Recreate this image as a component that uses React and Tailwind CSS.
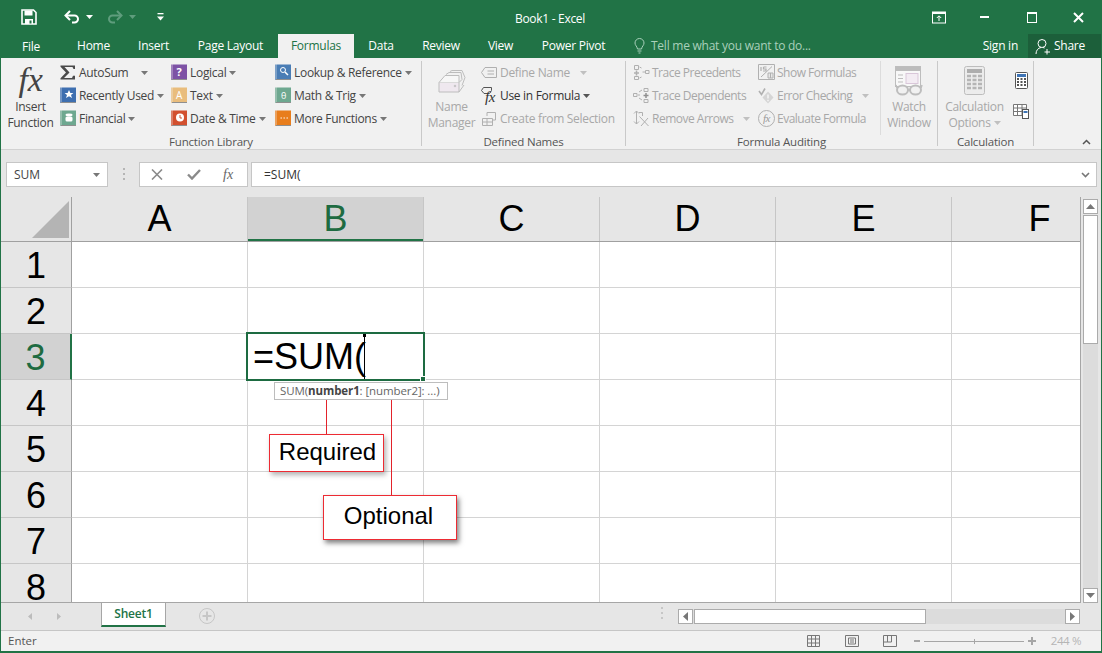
const ui = { fontFamily: "'Open Sans', 'Noto Sans', sans-serif" };

function Caret({ className = "" }) {
  return (
    <svg width="7" height="4" viewBox="0 0 7 4" className={`shrink-0 ${className}`}>
      <path d="M0 0h7L3.5 4z" fill="currentColor" />
    </svg>
  );
}

// the little coloured "book" icons of the function library
function Book({ color, children }) {
  return (
    <svg width="16" height="17" viewBox="0 0 16 17" className="shrink-0">
      <rect x="0" y="0.5" width="2" height="15.5" fill={color} opacity="0.7" />
      <rect x="2" y="0.5" width="14" height="14.5" fill={color} />
      <rect x="1" y="15" width="15" height="1" fill="#8f8f8f" />
      {children}
    </svg>
  );
}

function Sigma() {
  return (
    <svg width="16" height="15" viewBox="0 0 16 15" className="shrink-0">
      <path d="M0.5 0.5h14.5v3.5h-1.5l-1-2H4.5l5 5.5-5.5 5.5h8l1-2.2H15v3.7H0.5v-1.3L6 7.5 0.5 1.8z" fill="#4a4a4a" />
    </svg>
  );
}

function FnCommand({ icon, label, caret, caretGap = "ml-[3px]" }) {
  return (
    <div className="flex h-[23px] items-center whitespace-nowrap">
      <div className="flex w-[19px] shrink-0">{icon}</div>
      <span className="text-[#444]">{label}</span>
      {caret && <Caret className={`${caretGap} text-[#777]`} />}
    </div>
  );
}

function Disabled({ icon, label, caret, caretGap = "ml-[3px]", enabled }) {
  return (
    <div className="flex h-[23px] items-center whitespace-nowrap">
      <div className="flex w-[19px] shrink-0">{icon}</div>
      <span className={enabled ? "text-[#333]" : "text-[#a8a8a8]"}>{label}</span>
      {caret && <Caret className={`${caretGap} ${enabled ? "text-[#555]" : "text-[#c0c0c0]"}`} />}
    </div>
  );
}

function Glyph({ children }) {
  return (
    <svg width="17" height="17" viewBox="0 0 17 17" fill="none" stroke="#b0b0b0" className="shrink-0">
      {children}
    </svg>
  );
}

function Group({ label, width, children }) {
  return (
    <div className={`flex h-[85px] shrink-0 flex-col border-r border-[#c9c9c9] ${width}`}>
      <div className="flex h-[74px] shrink-0">{children}</div>
      <div className="text-center text-[11.5px] leading-[14px] tracking-[-0.2px] text-[#555]">{label}</div>
    </div>
  );
}

const tabs = [
  { name: "Home", w: "w-[61px]" },
  { name: "Insert", w: "w-[59px]" },
  { name: "Page Layout", w: "w-[95px]" },
];
const tabs2 = [
  { name: "Data", w: "w-[54px]" },
  { name: "Review", w: "w-[66px]" },
  { name: "View", w: "w-[53px]" },
  { name: "Power Pivot", w: "w-[93px]" },
];

function TitleBar() {
  return (
    <div className="relative flex h-[34px] items-center bg-[#217346] text-white">
      <svg width="16" height="16" viewBox="0 0 16 16" className="ml-[20px]">
        <path d="M1 1h11.5L15 3.5V15H1z" fill="none" stroke="#fff" strokeWidth="1.6" />
        <rect x="3.5" y="1.5" width="8" height="5" fill="#fff" />
        <rect x="4" y="10" width="8" height="5" fill="#fff" />
        <rect x="8.5" y="11.5" width="2" height="3" fill="#217346" />
      </svg>
      <svg width="16" height="14" viewBox="0 0 16 14" fill="none" className="ml-[27px]">
        <path d="M2 5.5h8.5a3.5 3.5 0 0 1 0 7H8" stroke="#fff" strokeWidth="2" />
        <path d="M6 1L1.5 5.5 6 10" stroke="#fff" strokeWidth="2" />
      </svg>
      <Caret className="ml-[6px] text-white" />
      <svg width="16" height="14" viewBox="0 0 16 14" fill="none" className="ml-[14px]">
        <path d="M14 5.5H5.5a3.5 3.5 0 0 0 0 7H8" stroke="#5f9d7d" strokeWidth="2" />
        <path d="M10 1l4.5 4.5L10 10" stroke="#5f9d7d" strokeWidth="2" />
      </svg>
      <Caret className="ml-[6px] text-[#5f9d7d]" />
      <svg width="7" height="8" viewBox="0 0 7 8" className="ml-[21px]">
        <rect x="0.5" y="0" width="6" height="1.3" fill="#fff" />
        <path d="M0 3.5h7L3.5 7.5z" fill="#fff" />
      </svg>
      <div className="absolute left-[514px] top-[9px] text-[12px] leading-[20px] tracking-[-0.3px]">Book1 - Excel</div>
      <div className="ml-auto flex items-center">
        <svg width="14" height="13" viewBox="0 0 14 13" fill="none" className="mr-[34px]">
          <rect x="0.5" y="1" width="13" height="11" stroke="#fff" />
          <rect x="0.5" y="1" width="13" height="2" fill="#fff" />
          <path d="M7 10V5M4.8 7L7 4.8 9.2 7" stroke="#fff" />
        </svg>
        <div className="mr-[38px] h-[2px] w-[9px] bg-white" />
        <div className="mr-[36px] h-[11px] w-[10px] border border-t-2 border-white" />
        <svg width="11" height="11" viewBox="0 0 11 11" className="mr-[17px]">
          <path d="M1 1l9 9M10 1l-9 9" stroke="#fff" strokeWidth="2" />
        </svg>
      </div>
    </div>
  );
}

function TabBar() {
  return (
    <div className="flex h-[24px] items-stretch bg-[#217346] text-[12px] tracking-[-0.25px] text-white">
      <div className="flex w-[62px] items-center justify-center pr-[2px] pt-px">File</div>
      {tabs.map((t) => (
        <div key={t.name} className={`flex items-center justify-center ${t.w}`}>{t.name}</div>
      ))}
      <div className="flex w-[76px] items-center justify-center bg-[#f1f1f1] text-[#217346]">Formulas</div>
      {tabs2.map((t) => (
        <div key={t.name} className={`flex items-center justify-center ${t.w}`}>{t.name}</div>
      ))}
      <svg width="11" height="16" viewBox="0 0 11 16" fill="none" className="ml-[14px] mt-[4px]">
        <path d="M3.5 11C3 8 1 7.5 1 5a4.5 4.5 0 0 1 9 0c0 2.500-2 3-2.500 6zM3.500 13h4M4.500 15h2" stroke="#a9d0bb" />
      </svg>
      <div className="ml-[6px] flex items-center text-[#a9d0bb]">Tell me what you want to do...</div>
      <div className="ml-auto flex items-center">Sign in</div>
      <div className="ml-[10px] flex w-[73px] items-center bg-[#1c5f3a] pl-[7px]">
        <svg width="16" height="17" viewBox="0 0 16 17" fill="none">
          <circle cx="7" cy="5.500" r="4" stroke="#fff" />
          <path d="M1 16c0-3.500 2-6 5-6.500M8 9.500l1.500.5M12 11v5.500M9.500 14H15" stroke="#fff" />
        </svg>
        <span className="ml-[3px]">Share</span>
      </div>
    </div>
  );
}

function Ribbon() {
  return (
    <div className="flex h-[92px] border-b border-[#d2d2d2] bg-[#f1f1f1] pt-[3px] text-[12px] leading-[16px] tracking-[-0.3px]" style={ui}>
      <Group label="Function Library" width="w-[421px]">
        <div className="flex w-[59px] shrink-0 flex-col items-center">
          <div className="h-[38px] pt-[2px] font-['Liberation_Serif',serif] text-[34px] italic leading-[34px] text-[#444]">fx</div>
          <div className="text-center text-[#444]">Insert<br />Function</div>
        </div>
        <div className="w-[111px] shrink-0">
          <FnCommand icon={<Sigma />} label="AutoSum" caret caretGap="ml-[13px]" />
          <FnCommand icon={<Book color="#3e6fb0"><path d="M9 3l1.400 3h3l-2.400 2 1 3-3-1.800L6 11l1-3-2.400-2h3z" fill="#fff" /></Book>} label="Recently Used" caret />
          <FnCommand icon={<Book color="#6ea890"><ellipse cx="9" cy="5" rx="3.500" ry="1.400" fill="#fff" /><rect x="5.500" y="6.500" width="7" height="5" rx="1.500" fill="#fff" /></Book>} label="Financial" caret />
        </div>
        <div className="w-[104px] shrink-0">
          <FnCommand icon={<Book color="#7d52a5"><text x="5.500" y="12" fontSize="11" fontWeight="700" fill="#fff">?</text></Book>} label="Logical" caret />
          <FnCommand icon={<Book color="#e9bd7d"><text x="5" y="12" fontSize="10" fill="#fff">A</text></Book>} label="Text" caret />
          <FnCommand icon={<Book color="#d2502f"><circle cx="9" cy="7.500" r="4" fill="#fff" /><path d="M9 5v3h2" stroke="#d2502f" fill="none" /></Book>} label="Date & Time" caret />
        </div>
        <div className="shrink-0">
          <FnCommand icon={<Book color="#4a7db5"><circle cx="8" cy="6" r="2.500" fill="none" stroke="#fff" /><path d="M10 8l3 3" stroke="#fff" strokeWidth="1.500" /></Book>} label="Lookup & Reference" caret />
          <FnCommand icon={<Book color="#6ea890"><text x="6" y="11.500" fontSize="9" fill="#fff">θ</text></Book>} label="Math & Trig" caret />
          <FnCommand icon={<Book color="#e87d1c"><path d="M5.500 8h1.400M8.500 8h1.400M11.500 8h1.400" stroke="#fff" /></Book>} label="More Functions" caret />
        </div>
      </Group>

      <Group label="Defined Names" width="w-[204px]">
        <div className="flex w-[59px] shrink-0 flex-col items-center text-[#a8a8a8]">
          <div className="h-[38px] pt-[9px]">
            <svg width="28" height="23" viewBox="0 0 28 23" fill="none" stroke="#bdbdbd">
              <path d="M1 12.500h20v9.500H1z" fill="#efe8ef" />
              <path d="M1 12.500L7 5.500h14l0 7" fill="#f7f7f7" />
              <path d="M8 4.500L11 2.500h12l1 7-3 3M12 1.500L14 .5h10l3 7-3 8" />
              <path d="M21 22l5-7" />
              <circle cx="17" cy="16" r="0.800" />
            </svg>
          </div>
          <div className="text-center">Name<br />Manager</div>
        </div>
        <div>
          <Disabled icon={<Glyph><path d="M4 3.500h11.500v10H4L.5 8.500z" /><path d="M6.500 7h6.500M6.500 10h6.500" /></Glyph>} label="Define Name" caret caretGap="ml-[10px]" />
          <Disabled
            enabled
            icon={
              <div className="relative h-[18px] w-[17px]">
                <svg width="11" height="8" viewBox="0 0 11 8" fill="none" className="absolute left-0 top-0">
                  <path d="M2.500.5h8v3l-2 3H3L.5 3.500z" stroke="#555" />
                </svg>
                <span className="absolute left-[4px] top-[2px] font-['Liberation_Serif',serif] text-[15px] italic leading-[16px] text-[#333]">fx</span>
              </div>
            }
            label="Use in Formula"
            caret
          />
          <Disabled icon={<Glyph><path d="M1.500 8.500h10v7h-10zM1.500 12h10M6 8.500v7" /><path d="M6 6V2.500h8.500V10H12" /></Glyph>} label="Create from Selection" />
        </div>
      </Group>

      <Group label="Formula Auditing" width="w-[312px]">
        <div className="w-[132px] shrink-0 pl-[7px] tracking-[-0.5px]">
          <Disabled icon={<Glyph><path d="M1.500 1.500h4v4h-4zM1.500 12.500h4v3h-4zM12.500 6.500h3.500v3h-3.500zM6.500 3l2 1M6.500 14l2-1M9.500 8H12" /><path d="M3.500 6.500v5M1 9h5" strokeWidth="1.500" /></Glyph>} label="Trace Precedents" />
          <Disabled icon={<Glyph><path d="M.5 6.500h3.500v3H.5zM11 1.500h4v3h-4zM11 12.500h4v3h-4zM5 8h2M6 5l3-2M6 11l3 2" /><path d="M13 6v5M10.500 8.500h5" stroke="#909090" strokeWidth="1.500" /></Glyph>} label="Trace Dependents" />
          <Disabled icon={<Glyph><path d="M3.500 1v13M1 3.500L3.500 1 6 3.500M1 11.500L3.500 14 6 11.500M6 2.500h3.500V6M6.500 6.500L15.500 16M15 8l-7 8" /></Glyph>} label="Remove Arrows" caret caretGap="ml-[10px]" />
        </div>
        <div className="w-[123px] shrink-0 border-r border-[#dcdcdc] tracking-[-0.5px]">
          <Disabled icon={<Glyph><path d="M.5.500h16v15H.5zM3 13L14 2.500" /><path d="M3 3v4M5.500 3h3M5.500 3v2h2.500v2h-3" strokeWidth="1.200" /><path d="M10 9h5v5h-5zM12.500 9v5" fill="#e7e7e7" /></Glyph>} label="Show Formulas" />
          <Disabled icon={<Glyph><path d="M1 4l2.500 3.500L7 1.500" strokeWidth="1.600" /><path d="M10 4.500l5.500 6-5.500 6-5.500-6z" fill="#d5d5d5" stroke="none" /><path d="M10 7.500v4M10 12.800v1.400" stroke="#f7f7f7" strokeWidth="1.400" /></Glyph>} label="Error Checking" caret caretGap="ml-[10px]" />
          <Disabled
            icon={
              <div className="flex h-[17px] w-[17px] items-center justify-center rounded-full border border-[#b0b0b0] font-['Liberation_Serif',serif] text-[11px] italic leading-none text-[#999]">fx</div>
            }
            label="Evaluate Formula"
          />
        </div>
        <div className="flex flex-1 flex-col items-center text-[#a8a8a8]">
          <div className="h-[38px] pt-[5px]">
            <svg width="30" height="30" viewBox="0 0 30 30" fill="none" stroke="#bdbdbd">
              <rect x="1.500" y="0.500" width="25" height="20" fill="#f8f8f8" />
              <rect x="1.500" y="0.500" width="25" height="4" fill="#bcbcbc" />
              <rect x="12" y="7.500" width="12" height="10" fill="#f3ecf3" stroke="#d9c7d9" />
              <path d="M4 9h5M4 12.500h5M4 16h5" />
              <ellipse cx="8.500" cy="24" rx="5.500" ry="4.500" fill="#f1f1f1" strokeWidth="2" />
              <ellipse cx="21.500" cy="24" rx="5.500" ry="4.500" fill="#f1f1f1" strokeWidth="2" />
              <path d="M14 24h2M3 22l-1-3M27 22l1-3" strokeWidth="1.500" />
            </svg>
          </div>
          <div className="text-center">Watch<br />Window</div>
        </div>
      </Group>

      <Group label="Calculation" width="w-[96px]">
        <div className="flex w-[73px] shrink-0 flex-col items-center text-[#a8a8a8]">
          <div className="h-[38px] pt-[5px]">
            <svg width="21" height="29" viewBox="0 0 21 29" fill="none">
              <rect x="0.500" y="0.500" width="20" height="28" rx="2" fill="#ececec" stroke="#bdbdbd" />
              <rect x="3" y="3" width="15" height="4" fill="#aeaeae" />
              <path d="M3 10h15M3 14h15M3 18h15M3 22h15" stroke="#b5b5b5" strokeWidth="2.500" strokeDasharray="4 1.500" />
            </svg>
          </div>
          <div className="text-center">Calculation</div>
          <div className="flex items-center">Options<Caret className="ml-[3px] text-[#c0c0c0]" /></div>
        </div>
        <div className="flex flex-col items-center pl-[2px]">
          <svg width="13" height="17" viewBox="0 0 13 17" fill="none" className="mt-[11px]">
            <rect x="0.500" y="0.500" width="12" height="16" rx="1" fill="#fff" stroke="#555" />
            <rect x="2" y="2" width="9" height="3" fill="#3e74b5" />
            <path d="M2 7h9M2 10h9M2 13h9" stroke="#555" strokeWidth="2" strokeDasharray="2 1.500" />
          </svg>
          <svg width="16" height="15" viewBox="0 0 16 15" fill="none" className="mt-[15px]">
            <path d="M0.500 0.500h13v11h-13zM0.500 4h13M0.500 7.500h13M4.500 .5v11M9 .5v11" fill="#fff" stroke="#777" />
            <rect x="9.500" y="5.500" width="6" height="9" fill="#fff" stroke="#555" />
            <rect x="10.500" y="7" width="4" height="2" fill="#3e74b5" />
          </svg>
        </div>
      </Group>

      <div className="relative flex-1">
        <svg width="9" height="6" viewBox="0 0 9 6" fill="none" className="absolute left-[48px] top-[78px]">
          <path d="M1 5l3.500-3.500L8 5" stroke="#555" strokeWidth="1.500" />
        </svg>
      </div>
    </div>
  );
}

function FormulaBar() {
  return (
    <div className="flex h-[47px] items-start bg-[#e6e6e6] pl-[5px] pt-[12px] text-[12px]" style={ui}>
      <div className="flex h-[25px] w-[102px] items-center border border-[#c6c6c6] bg-white pl-[7px] pr-[7px] text-[#444]">
        SUM
        <Caret className="ml-auto text-[#777]" />
      </div>
      <div className="ml-[15px] flex w-[3px] flex-col gap-[3px] pt-[6px]">
        <div className="h-[2px] w-[2px] bg-[#b5b5b5]" />
        <div className="h-[2px] w-[2px] bg-[#b5b5b5]" />
        <div className="h-[2px] w-[2px] bg-[#b5b5b5]" />
      </div>
      <div className="ml-[13px] flex h-[25px] w-[109px] items-center border border-[#c6c6c6] bg-white">
        <svg width="12" height="11" viewBox="0 0 12 11" className="ml-[11px]">
          <path d="M1 .5l10 10M11 .5l-10 10" stroke="#8a8a8a" strokeWidth="1.600" />
        </svg>
        <svg width="14" height="11" viewBox="0 0 14 11" fill="none" className="ml-[24px]">
          <path d="M1 5.500l4 4 8-8.500" stroke="#8a8a8a" strokeWidth="2.400" />
        </svg>
        <span className="ml-[22px] font-['Liberation_Serif',serif] text-[14px] italic text-[#666]">fx</span>
      </div>
      <div className="ml-[3px] flex h-[25px] w-[846px] items-center border border-[#c6c6c6] bg-white pl-[12px] pr-[6px] text-[#333]">
        =SUM(
        <svg width="9" height="6" viewBox="0 0 9 6" fill="none" className="ml-auto">
          <path d="M1 1l3.500 3.500L8 1" stroke="#777" strokeWidth="1.600" />
        </svg>
      </div>
    </div>
  );
}

const cols = ["A", "B", "C", "D", "E", "F"];
const rows = [1, 2, 3, 4, 5, 6, 7, 8];

function Sheet() {
  return (
    <div className="relative h-[406px] w-[1080px] shrink-0 overflow-hidden border-r border-b border-[#a6a6a6] bg-white font-['Liberation_Sans',sans-serif] text-[36px] text-black">
      <div className="flex h-[45px] border-b border-[#a0a0a0] bg-[#e6e6e6]">
        <div className="relative w-[71px] shrink-0 border-r border-[#a0a0a0]">
          <div className="absolute bottom-[3px] right-[2px] h-0 w-0 border-b-[37px] border-l-[37px] border-b-[#b4b4b4] border-l-transparent" />
        </div>
        {cols.map((c) => (
          <div
            key={c}
            className={
              c === "B"
                ? "flex w-[176px] shrink-0 items-center justify-center border-r border-[#c6c6c6] bg-[#d2d2d2] text-[#1e6b41] shadow-[inset_0_-2px_0_#217346]"
                : "flex w-[176px] shrink-0 items-center justify-center border-r border-[#c6c6c6]"
            }
          >
            {c}
          </div>
        ))}
      </div>
      {rows.map((r) => (
        <div key={r} className="flex h-[46px]">
          <div
            className={
              r === 3
                ? "flex w-[71px] shrink-0 items-center justify-center border-r-2 border-b border-r-[#217346] border-b-[#c6c6c6] bg-[#d2d2d2] pt-[2px] text-[#1e6b41]"
                : "flex w-[71px] shrink-0 items-center justify-center border-r border-b border-r-[#a0a0a0] border-b-[#c6c6c6] bg-[#e6e6e6] pt-[2px]"
            }
          >
            {r}
          </div>
          {cols.map((c) => (
            <div key={c} className="w-[176px] shrink-0 border-r border-b border-[#d4d4d4]" />
          ))}
        </div>
      ))}

      {/* active cell */}
      <div className="absolute left-[245px] top-[135px] h-[49px] w-[179px] border-2 border-[#1d6b41] bg-white pl-[5px] leading-[46px]">
        =SUM(
        <div className="absolute left-[116px] top-0 h-[45px] w-px bg-black" />
        <div className="absolute left-[115px] top-0 h-[3px] w-[3px] bg-black" />
        <div className="absolute -bottom-[3px] -right-[3px] h-[6px] w-[6px] border border-white bg-[#1d6b41]" />
      </div>

      {/* formula tip */}
      <div className="absolute left-[273px] top-[185px] z-10 flex h-[18px] w-[174px] items-center whitespace-nowrap border border-[#bdbdbd] bg-white pl-[5px] text-[11.5px] tracking-[-0.1px] text-[#666]" style={ui}>
        SUM(<b className="text-[#444]">number1</b>: [number2]: ...)
      </div>

      {/* callouts */}
      <div className="absolute left-[325px] top-[201px] h-[36px] w-px bg-[#e3232b]" />
      <div className="absolute left-[390px] top-[201px] h-[97px] w-px bg-[#e3232b]" />
      <div className="absolute left-[268px] top-[237px] flex h-[38px] w-[115px] items-center justify-center border border-[#ed2b33] bg-white pb-[2px] pl-[2px] text-[24px] shadow-[2px_3px_5px_rgba(0,0,0,0.3)]">
        Required
      </div>
      <div className="absolute left-[322px] top-[298px] flex h-[45px] w-[134px] items-center justify-center border border-[#ed2b33] bg-white pb-[3px] pr-[3px] text-[24px] shadow-[2px_3px_5px_rgba(0,0,0,0.5)]">
        Optional
      </div>
    </div>
  );
}

function VScroll() {
  return (
    <div className="ml-[2px] flex h-[406px] w-[15px] flex-col bg-[#e6e6e6] pt-[2px]">
      <div className="flex h-[15px] shrink-0 items-center justify-center border border-[#ababab] bg-white">
        <svg width="9" height="5" viewBox="0 0 9 5"><path d="M0 5h9L4.500 0z" fill="#777" /></svg>
      </div>
      <div className="mt-px h-[129px] shrink-0 border border-[#ababab] bg-white" />
      <div className="flex-1 bg-[#dcdcdc]" />
      <div className="flex h-[15px] shrink-0 items-center justify-center border border-[#ababab] bg-white">
        <svg width="9" height="5" viewBox="0 0 9 5"><path d="M0 0h9L4.500 5z" fill="#777" /></svg>
      </div>
    </div>
  );
}

function SheetTabs() {
  return (
    <div className="flex h-[27px] items-start bg-[#e6e6e6] text-[12px]" style={ui}>
      <svg width="4" height="7" viewBox="0 0 4 7" className="ml-[27px] mt-[10px]"><path d="M4 0v7L0 3.500z" fill="#bcbcbc" /></svg>
      <svg width="4" height="7" viewBox="0 0 4 7" className="ml-[25px] mt-[10px]"><path d="M0 0v7l4-3.500z" fill="#bcbcbc" /></svg>
      <div className="ml-[40px] flex h-[24px] w-[65px] items-center justify-center border-x border-[#a6a6a6] border-b-2 border-b-[#217346] bg-white font-semibold tracking-[-0.2px] text-[#217346]">
        Sheet1
      </div>
      <svg width="16" height="16" viewBox="0 0 16 16" fill="none" className="ml-[33px] mt-[5px]">
        <circle cx="8" cy="8" r="7.500" stroke="#c6c6c6" />
        <path d="M8 3.500v9M3.500 8h9" stroke="#c6c6c6" strokeWidth="2" />
      </svg>
      <div className="ml-[446px] mt-[3px] flex w-[3px] flex-col gap-[3px] pt-[1px]">
        <div className="h-[2px] w-[2px] bg-[#c6c6c6]" />
        <div className="h-[2px] w-[2px] bg-[#c6c6c6]" />
        <div className="h-[2px] w-[2px] bg-[#c6c6c6]" />
      </div>
      <div className="ml-[14px] mt-[6px] flex h-[15px] w-[402px] bg-[#dcdcdc]">
        <div className="flex h-full w-[15px] items-center justify-center border border-[#ababab] bg-white">
          <svg width="5" height="9" viewBox="0 0 5 9"><path d="M5 0v9L0 4.500z" fill="#777" /></svg>
        </div>
        <div className="ml-px h-full w-[232px] border border-[#ababab] bg-white" />
        <div className="ml-auto flex h-full w-[15px] items-center justify-center border border-[#ababab] bg-white">
          <svg width="5" height="9" viewBox="0 0 5 9"><path d="M0 0v9l5-4.500z" fill="#777" /></svg>
        </div>
      </div>
    </div>
  );
}

function StatusBar() {
  return (
    <div className="flex h-[21px] items-center border-t border-[#c6c6c6] bg-[#f1f1f1] pl-[7px] text-[11.500px] text-[#555]" style={ui}>
      Enter
      <div className="ml-auto flex items-center pr-[20px]">
        <svg width="13" height="12" viewBox="0 0 13 12" fill="none">
          <path d="M.5.500h12v11H.5zM.5 4h12M.5 8h12M4.500.500v11M8.500.500v11" stroke="#777" />
        </svg>
        <svg width="14" height="12" viewBox="0 0 14 12" fill="none" className="ml-[25px]">
          <path d="M.5.500h13v11H.5z" stroke="#777" />
          <path d="M3.500 3h7v6h-7zM5 5h4M5 7h4" stroke="#777" />
        </svg>
        <svg width="14" height="12" viewBox="0 0 14 12" fill="none" className="ml-[24px]">
          <path d="M.5.500h13v11H.5zM.5 7h8V.500M4.500.500V7" stroke="#777" />
        </svg>
        <div className="ml-[17px] h-[2px] w-[6px] bg-[#a6a6a6]" />
        <div className="relative ml-[4px] h-px w-[100px] bg-[#a6a6a6]">
          <div className="absolute left-[50px] -top-[2px] h-[5px] w-px bg-[#a6a6a6]" />
        </div>
        <svg width="8" height="8" viewBox="0 0 8 8" className="ml-[4px]">
          <path d="M4 0v8M0 4h8" stroke="#a6a6a6" strokeWidth="2" />
        </svg>
        <span className="ml-[15px] tracking-[-0.4px] text-[#b5b5b5]">244 %</span>
      </div>
    </div>
  );
}

export default function App() {
  return (
    <div className="h-[653px] w-[1102px] overflow-hidden border-x border-b-2 border-[#217346] bg-[#e6e6e6]" style={ui}>
      <TitleBar />
      <TabBar />
      <Ribbon />
      <FormulaBar />
      <div className="flex">
        <Sheet />
        <VScroll />
      </div>
      <SheetTabs />
      <StatusBar />
    </div>
  );
}
